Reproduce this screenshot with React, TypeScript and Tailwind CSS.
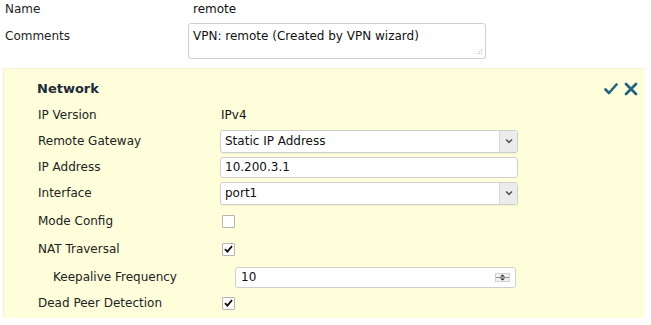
import React from "react";

const Check = () => (
  <svg width="9" height="8" viewBox="0 0 9 8" className="block">
    <path d="M1 4.2 L3.4 6.6 L8 1.2" fill="none" stroke="#111" strokeWidth="1.8" />
  </svg>
);

const Box = ({ checked }: { checked?: boolean }) => (
  <div className="w-[13px] h-[13px] border border-[#b5b5b5] bg-white flex items-center justify-center rounded-[1px]">
    {checked && <Check />}
  </div>
);

const Chevron = () => (
  <svg width="8" height="6" viewBox="0 0 8 6">
    <path d="M1 1.5 L4 4.3 L7 1.5" fill="none" stroke="#555" strokeWidth="1.6" />
  </svg>
);

const Select = ({ value }: { value: string }) => (
  <div className="w-[298px] h-[23px] border border-[#cfcfcf] rounded-[3px] bg-white flex items-center shadow-[0_1px_1px_rgba(0,0,0,0.06)]">
    <span className="flex-1 pl-[4px] text-[#111]">{value}</span>
    <div className="w-[18px] h-full bg-[#ececec] border-l border-[#d8d8d8] rounded-r-[3px] flex items-center justify-center">
      <Chevron />
    </div>
  </div>
);

const Row = ({ h, label, indent, children }: { h: string; label: string; indent?: boolean; children?: React.ReactNode }) => (
  <div className={`flex items-center ${h}`}>
    <div className={indent ? "w-[231px] pl-[49px] shrink-0 text-[#222]" : "w-[216px] pl-[34px] shrink-0 text-[#222]"}>{label}</div>
    <div className="flex items-center">{children}</div>
  </div>
);

export default function App() {
  return (
    <div
      className="w-[651px] h-[325px] bg-white text-[12px] text-[#222] overflow-hidden"
      style={{ fontFamily: '"DejaVu Sans", Verdana, sans-serif' }}
    >
      <div className="flex items-center h-[17px]">
        <div className="w-[193px] pl-[5px]">Name</div>
        <div className="text-[#111]">remote</div>
      </div>
      <div className="flex items-start mt-[6px] h-[36px]">
        <div className="w-[188px] pl-[5px] pt-[4px]">Comments</div>
        <div className="relative w-[298px] h-[36px] border border-[#cfcfcf] rounded-[3px] bg-white pl-[4px] pt-[3px] text-[#111]">
          VPN: remote (Created by VPN wizard)
          <svg className="absolute right-[2px] bottom-[2px]" width="8" height="8" viewBox="0 0 8 8">
            <g fill="#bbb">
              <rect x="6" y="1" width="1" height="1" />
              <rect x="4" y="3" width="1" height="1" />
              <rect x="6" y="3" width="1" height="1" />
              <rect x="2" y="5" width="1" height="1" />
              <rect x="4" y="5" width="1" height="1" />
              <rect x="6" y="5" width="1" height="1" />
            </g>
          </svg>
        </div>
      </div>
      <div className="ml-[3px] mt-[9px] w-[641px] h-[250px] bg-[#fefedb] border-l border-t border-[#f3f3cf] pt-[7px]">
        <div className="flex items-center h-[26px] pl-[33px] pr-[6px]">
          <div className="flex-1 font-bold text-[13px] text-[#1c2b3a]">Network</div>
          <div className="flex items-center gap-[6px]">
            <svg width="14" height="14" viewBox="0 0 14 14">
              <path d="M1.5 7.5 L5 11 L12.5 2.5" fill="none" stroke="#24627f" strokeWidth="2.6" strokeLinecap="round" strokeLinejoin="round" />
            </svg>
            <svg width="14" height="14" viewBox="0 0 14 14">
              <path d="M2 2 L12 12 M12 2 L2 12" fill="none" stroke="#24627f" strokeWidth="2.8" strokeLinecap="round" />
            </svg>
          </div>
        </div>
        <Row h="h-[26px]" label="IP Version">
          <span className="text-[#111] pl-[1px]">IPv4</span>
        </Row>
        <Row h="h-[26px]" label="Remote Gateway">
          <Select value="Static IP Address" />
        </Row>
        <Row h="h-[26px]" label="IP Address">
          <div className="w-[298px] h-[21px] border border-[#cfcfcf] rounded-[3px] bg-white flex items-center pl-[4px] text-[#111]">
            10.200.3.1
          </div>
        </Row>
        <Row h="h-[26px]" label="Interface">
          <Select value="port1" />
        </Row>
        <Row h="h-[30px]" label="Mode Config">
          <div className="pl-[2px]"><Box /></div>
        </Row>
        <Row h="h-[26px]" label="NAT Traversal">
          <div className="pl-[2px]"><Box checked /></div>
        </Row>
        <Row h="h-[30px]" label="Keepalive Frequency" indent>
          <div className="relative w-[281px] h-[21px] border border-[#cfcfcf] rounded-[3px] bg-white flex items-center pl-[5px] text-[#111]">
            10
            <svg className="absolute right-[5px] top-[5px]" width="15" height="9" viewBox="0 0 15 9">
              <rect x="0.5" y="0.5" width="14" height="8" fill="#f2f2f2" stroke="#d0d0d0" />
              <path d="M5 3.6 L7.5 1.5 L10 3.6 Z" fill="#222" />
              <path d="M5 5.4 L7.5 7.5 L10 5.4 Z" fill="#222" />
              <path d="M1 4.5 H14" stroke="#777" strokeWidth="0.8" />
            </svg>
          </div>
        </Row>
        <Row h="h-[22px]" label="Dead Peer Detection">
          <div className="pl-[2px]"><Box checked /></div>
        </Row>
      </div>
    </div>
  );
}
